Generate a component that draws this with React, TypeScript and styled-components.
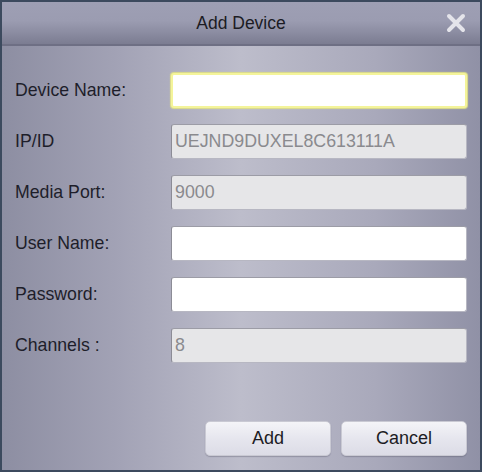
import React from "react";
import styled, { createGlobalStyle } from "styled-components";

const Global = createGlobalStyle`
  html, body { margin: 0; padding: 0; }
  body { font-family: "Liberation Sans", Arial, sans-serif; }
`;

const Dialog = styled.div`
  width: 482px;
  height: 472px;
  box-sizing: border-box;
  border: 2px solid #3c4a5e;
  display: flex;
  flex-direction: column;
  background: linear-gradient(90deg, #8d8ea2 0%, #a3a3b6 25%, #bdbdcb 50%, #a9a9bb 78%, #9091a6 100%);
`;

const TitleBar = styled.div`
  height: 42px;
  flex: none;
  position: relative;
  display: flex;
  align-items: center;
  justify-content: center;
  background: linear-gradient(180deg, #9e9fb4 0%, #9b9cb1 45%, #8a8ba0 75%, #7b7c91 100%);
  border-bottom: 2px solid #6e6f84;
`;

const Title = styled.div`
  font-size: 17.5px;
  color: #1c1c24;
  margin-top: 1px;
`;

const Close = styled.svg`
  position: absolute;
  right: 14px;
  top: 11px;
`;

const Form = styled.div`
  display: flex;
  flex-direction: column;
  gap: 16px;
  padding: 27px 13px 0 13px;
  flex: 1;
`;

const Row = styled.div`
  display: flex;
  align-items: center;
  height: 35px;
`;

const Label = styled.div`
  width: 156px;
  font-size: 17.7px;
  color: #1e1e2a;
`;

const Field = styled.div<{ $mode: "focus" | "edit" | "disabled" }>`
  flex: 1;
  height: 35px;
  box-sizing: border-box;
  border-radius: 3px;
  display: flex;
  align-items: center;
  padding-left: 3px;
  font-size: 17.8px;
  color: #8a8a8e;
  background: ${(p) => (p.$mode === "disabled" ? "#e6e6e8" : "#ffffff")};
  border: ${(p) =>
    p.$mode === "focus" ? "2px solid #f4f49a" : "1px solid #b7b7c2"};
  border-left-color: ${(p) => (p.$mode === "focus" ? "#f4f49a" : "#8c8c96")};
  border-top-color: ${(p) => (p.$mode === "focus" ? "#f4f49a" : "#9c9ca6")};
  box-shadow: ${(p) => (p.$mode === "focus" ? "0 0 1px 1px #dede8a" : "none")};
`;

const Footer = styled.div`
  display: flex;
  justify-content: flex-end;
  gap: 10px;
  padding: 0 13px 14px 0;
`;

const Button = styled.button`
  width: 126px;
  height: 35px;
  border-radius: 5px;
  border: 1px solid #c9c9d3;
  background: linear-gradient(180deg, #f4f4f8 0%, #e6e6ee 50%, #dcdce6 100%);
  font-family: "Liberation Sans", Arial, sans-serif;
  font-size: 18px;
  color: #1c1c24;
  box-shadow: 0 1px 1px rgba(80, 80, 100, 0.35);
  padding: 0;
`;

const fields: { label: string; value: string; mode: "focus" | "edit" | "disabled" }[] = [
  { label: "Device Name:", value: "", mode: "focus" },
  { label: "IP/ID", value: "UEJND9DUXEL8C613111A", mode: "disabled" },
  { label: "Media Port:", value: "9000", mode: "disabled" },
  { label: "User Name:", value: "", mode: "edit" },
  { label: "Password:", value: "", mode: "edit" },
  { label: "Channels :", value: "8", mode: "disabled" },
];

export default function App() {
  return (
    <>
      <Global />
      <Dialog>
        <TitleBar>
          <Title>Add Device</Title>
          <Close width="20" height="20" viewBox="0 0 20 20">
            <path d="M3 3 L17 17 M17 3 L3 17" stroke="#e4e4ea" strokeWidth="4" strokeLinecap="round" />
          </Close>
        </TitleBar>
        <Form>
          {fields.map((f) => (
            <Row key={f.label}>
              <Label>{f.label}</Label>
              <Field $mode={f.mode}>{f.value}</Field>
            </Row>
          ))}
        </Form>
        <Footer>
          <Button>Add</Button>
          <Button>Cancel</Button>
        </Footer>
      </Dialog>
    </>
  );
}
